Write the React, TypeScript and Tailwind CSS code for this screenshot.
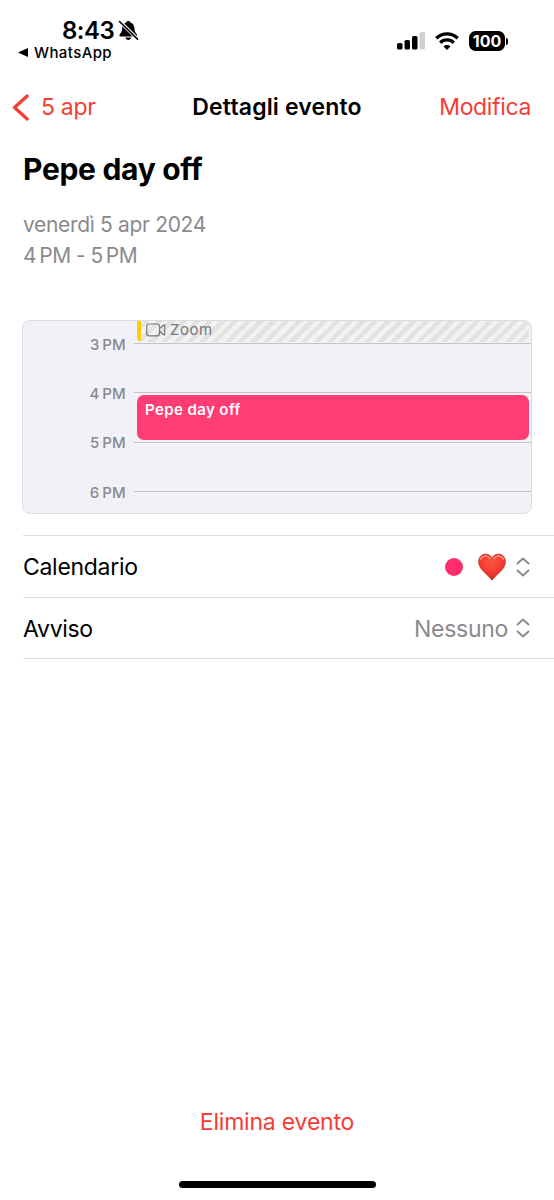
import { clsx } from "clsx";

const hours = ["3", "4", "5", "6"];

const BellOff = () => (
    <svg className="h-[21px] w-[21px]" viewBox="0 0 21 21">
        <path d="M10.300 1c1.100 0 1.900.6 2 1.400 2.600.8 4 2.800 4.100 5.600.1 3.300.9 4.800 2.400 6.200.8.800.4 2.300-.9 2.300H2.700c-1.300 0-1.700-1.500-.9-2.300 1.500-1.400 2.300-2.900 2.400-6.200.1-2.800 1.500-4.800 4.100-5.600.1-.8.900-1.400 2-1.400z" />
        <path d="M7.400 17.500h5.800c-.3 1.500-1.400 2.400-2.900 2.400s-2.600-.9-2.900-2.400z" />
        <path d="M2.900 1.300L20 18.100" stroke="#fff" strokeWidth="1.600" />
        <path d="M1.300 2.500l17.300 17" stroke="#fff" strokeWidth="1.200" />
        <path d="M1.500 1.500l18 17.600" stroke="#000" strokeWidth="1.600" strokeLinecap="round" />
    </svg>
);

const Signal = () => (
    <svg className="h-[18px] w-[28px]" viewBox="0 0 28 18">
        <rect x="0" y="11" width="5.500" height="6.500" rx="1.600" />
        <rect x="7.500" y="8" width="5.500" height="9.500" rx="1.600" />
        <rect x="15" y="4" width="5.500" height="13.500" rx="1.600" />
        <rect x="22.500" y="0" width="5.500" height="17.500" rx="1.600" fill="#d0d0d0" />
    </svg>
);

const Wifi = () => (
    <svg className="h-[18px] w-[24px]" viewBox="0 0 24 18" fill="none" stroke="#000" strokeWidth="3.300">
        <path d="M1.300 6.300a15.300 15.300 0 0 1 21.400 0" />
        <path d="M5.200 10.700a9.700 9.700 0 0 1 13.600 0" />
        <path d="M12 18l-3.500-3.600a5.100 5.100 0 0 1 7 0z" fill="#000" stroke="none" />
    </svg>
);

const Battery = () => (
    <div className="flex items-center gap-px">
        <div className="flex h-[20px] w-[36px] items-center justify-center rounded-[6.500px] bg-black text-[16px] leading-none font-bold text-white">100</div>
        <div className="h-[7px] w-[2px] rounded-r-full bg-black" />
    </div>
);

const Selector = () => (
    <svg className="h-[20px] w-[14px]" viewBox="0 0 14 20" fill="none" stroke="#8a8a8e" strokeWidth="1.900" strokeLinecap="round" strokeLinejoin="round">
        <path d="M1.500 6.500L7 1.500 12.500 6.500M1.500 13.500L7 18.500 12.500 13.500" />
    </svg>
);

const Heart = () => (
    <svg className="h-[28px] w-[28px]" viewBox="0 0 28 28">
        <defs>
            <radialGradient id="heart" cx=".5" cy=".3" r=".72">
                <stop offset="0" stopColor="#fb5547" />
                <stop offset=".55" stopColor="#f53c31" />
                <stop offset="1" stopColor="#c9241d" />
            </radialGradient>
        </defs>
        <path d="M14 4.900C11.800 1.100 7.400.3 4.300 1.900 1 3.700-.1 7.900 1.100 11.800c1.900 6 8.200 9.200 12.900 15.400 4.700-6.200 11-9.400 12.900-15.400 1.200-3.900.1-8.100-3.200-9.900C20.600.3 16.200 1.100 14 4.900z" fill="url(#heart)" stroke="#c23a31" strokeWidth=".800" />
        <path d="M2.700 6.500c1.100-3.700 6.500-4.700 9.200-1.100M16.100 5.400c2.700-3.600 8.100-2.600 9.200 1.100" fill="none" stroke="#ffc1b1" strokeWidth="1.200" strokeLinecap="round" opacity=".7" />
    </svg>
);

const Video = () => (
    <svg className="h-[14px] w-[20px]" viewBox="0 0 20 14" fill="none" stroke="#77777a" strokeWidth="1.200" strokeLinejoin="round">
        <rect x=".700" y="1" width="12.800" height="11.800" rx="2.300" />
        <path d="M13.500 5.500l4.200-3.500c.5-.4 1-.2 1 .4v9c0 .6-.5.8-1 .4l-4.200-3.500" />
    </svg>
);

const StatusBar = () => (
    <div className="flex h-[76px] justify-between pt-[19px] pr-[46px] pl-[18px]">
        <div>
            <div className="flex h-[23px] items-center gap-[4px] pl-[44px]">
                <span className="text-[24px] leading-none font-semibold tracking-[-0.5px]">8:43</span>
                <BellOff />
            </div>
            <div className="flex h-[20px] items-center gap-[6px]">
                <svg className="h-[9px] w-[10px]" viewBox="0 0 10 9"><path d="M0 4.500L10 0v9z" /></svg>
                <span className="text-[15px] leading-none font-medium tracking-[0.4px]">WhatsApp</span>
            </div>
        </div>
        <div className="flex h-[44px] items-center gap-[10px]">
            <Signal />
            <Wifi />
            <Battery />
        </div>
    </div>
);

const NavBar = () => (
    <div className="grid h-[62px] grid-cols-[1fr_auto_1fr] items-center pr-[23px] pl-[23px] text-[23px] text-[#f63c34]">
        <div className="-ml-[11px] flex items-center gap-[12px]">
            <svg className="h-[27px] w-[17px]" viewBox="0 0 17 27" fill="none" stroke="#f63c34" strokeWidth="3.200" strokeLinecap="round" strokeLinejoin="round">
                <path d="M15.200 2L2.500 13.500l12.700 11.500" />
            </svg>
            <span className="tracking-[-0.3px]">5 apr</span>
        </div>
        <h1 className="font-semibold tracking-[0.15px] text-black">Dettagli evento</h1>
        <span className="text-right tracking-[-0.35px]">Modifica</span>
    </div>
);

const Timeline = () => (
    <div className="relative mr-[22px] ml-[22px] h-[194px] overflow-hidden rounded-[8px] border border-[#dcdce1] bg-[#f2f1f7]">
        <div className="-mt-[2px] flex flex-col">
            {hours.map((hour) => (
                <div key={hour} className="flex h-[49.300px] items-center gap-[8px]">
                    <span className="w-[103px] pt-[3px] text-right text-[15px] font-medium tracking-[0.2px] text-[#8a8a8e]">{hour}&#8201;PM</span>
                    <div className="h-px flex-1 bg-[#c3c3cb]" />
                </div>
            ))}
        </div>
        <div className="absolute top-0 right-[2px] left-[114px] flex h-[21px] overflow-hidden rounded-b-[4px] bg-[repeating-linear-gradient(135deg,#f2f2f3_0px,#f2f2f3_4.500px,#e2e2e3_4.500px,#e2e2e3_9px)]">
            <div className="h-[20px] w-[4px] rounded-bl-[4px] bg-[#fccb05]" />
            <div className="flex h-[17px] items-center gap-[4px] pl-[5px] text-[15px] leading-[17px] tracking-[0.5px] text-[#77777a]">
                <Video />
                <span>Zoom</span>
            </div>
        </div>
        <div className="absolute top-[74px] right-[2px] left-[114px] h-[45px] rounded-[7px] bg-[#ff3d75] pt-[5px] pl-[8px] text-[15px] leading-[20px] font-semibold tracking-[0.4px] text-white">
            Pepe day off
        </div>
    </div>
);

const Row = ({ label, last, children }: { label: string; last?: boolean; children: React.ReactNode }) => (
    <div className={clsx("flex h-[62px] items-center justify-between border-t border-[#dedee0] pr-[24px]", last && "border-b")}>
        <span className="pt-[2px] tracking-[-0.3px]">{label}</span>
        <div className="flex items-center">{children}</div>
    </div>
);

export default function App() {
    return (
        <div className="flex h-[1200px] w-[554px] flex-col overflow-hidden bg-white font-['Inter',sans-serif] text-black">
            <StatusBar />
            <NavBar />
            <div className="h-[182px] px-[23px] pt-[11px]">
                <h2 className="text-[30px] leading-[40px] font-bold tracking-[-0.3px]">Pepe day off</h2>
                <div className="mt-[20px] text-[21px] leading-[31px] text-[#8a8a8e]">
                    <p className="tracking-[-0.33px]">venerdì 5 apr 2024</p>
                    <p className="tracking-[-0.55px]">4&#8201;PM - 5&#8201;PM</p>
                </div>
            </div>
            <Timeline />
            <div className="mt-[21px] ml-[23px] text-[23px]">
                <Row label="Calendario">
                    <div className="mr-[15px] h-[18px] w-[18px] rounded-full bg-[#ff2d6f]" />
                    <Heart />
                    <div className="ml-[10px]"><Selector /></div>
                </Row>
                <Row label="Avviso" last>
                    <span className="mr-[8px] pt-[2px] tracking-[-0.3px] text-[#8a8a8e]">Nessuno</span>
                    <Selector />
                </Row>
            </div>
            <div className="flex-1" />
            <button className="self-center text-[23px] leading-[30px] tracking-[-0.2px] text-[#f63c34]">Elimina evento</button>
            <div className="mt-[44px] mb-[12px] h-[7px] w-[197px] self-center rounded-full bg-black" />
        </div>
    );
}
